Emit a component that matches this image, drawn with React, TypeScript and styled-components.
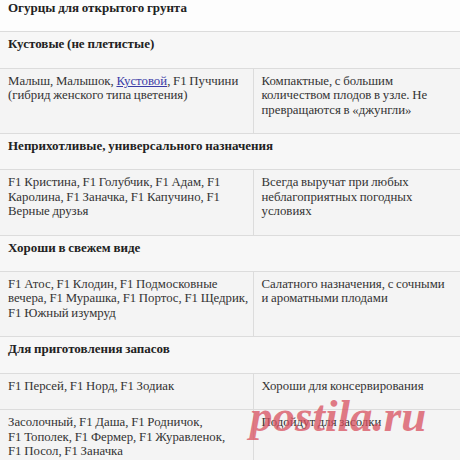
import React from 'react'
import styled, { createGlobalStyle } from 'styled-components'

const GlobalStyle = createGlobalStyle`
  html, body {
    margin: 0;
    padding: 0;
    background: #f4f4f4;
    overflow: hidden;
  }
`

const Page = styled.div`
  position: relative;
  width: 460px;
  height: 460px;
  overflow: hidden;
  background: #f4f4f4;
`

const Table = styled.table`
  border-collapse: collapse;
  table-layout: fixed;
  width: 460px;
  margin-top: -4px;
  font-family: 'Liberation Serif', 'Times New Roman', serif;
  font-size: 12.8px;
  line-height: 14.4px;
  word-spacing: -0.5px;
  color: #333;
`

const Cell = styled.td<{ $side?: boolean }>`
  padding: ${(p) => (p.$side ? '5px 8px 16px' : '5px 4px 16px 8px')};
  vertical-align: top;
  border-bottom: 1px solid #dcdcdc;
  border-left: ${(p) => (p.$side ? '1px solid #dcdcdc' : 'none')};
`

const HeadCell = styled.td<{ $title?: boolean }>`
  padding: 5px 8px 16px;
  vertical-align: top;
  font-weight: 700;
  font-size: 13px;
  color: #222;
  background: ${(p) => (p.$title ? '#fdfdfd' : '#f7f7f7')};
  border-bottom: 1px solid #dcdcdc;
`

const Link = styled.a`
  color: #3b3ba6;
  text-decoration: underline;
`

const Watermark = styled.div`
  position: absolute;
  left: 250px;
  top: 394px;
  font-family: 'Liberation Serif', 'Times New Roman', serif;
  font-style: italic;
  font-weight: 700;
  font-size: 45px;
  line-height: 45px;
  color: #d9505f;
  opacity: 0.75;
  pointer-events: none;
`

type Row =
  | { kind: 'head'; text: string; title?: boolean }
  | { kind: 'data'; left: React.ReactNode; right: string }

const nb = '\u00a0'

const rows: Row[] = [
  { kind: 'head', text: 'Огурцы для открытого грунта', title: true },
  { kind: 'head', text: 'Кустовые (не плетистые)' },
  {
    kind: 'data',
    left: (
      <>
        Малыш, Малышок, <Link href="#">Кустовой</Link>, F1 Пуччини (гибрид
        женского типа цветения)
      </>
    ),
    right: 'Компактные, с большим количеством плодов в узле. Не превращаются в «джунгли»'
  },
  { kind: 'head', text: 'Неприхотливые, универсального назначения' },
  {
    kind: 'data',
    left: 'F1 Кристина, F1 Голубчик, F1 Адам, F1 Каролина, F1 Заначка, F1 Капучино, F1 Верные друзья',
    right: 'Всегда выручат при любых неблагоприятных погодных условиях'
  },
  { kind: 'head', text: 'Хороши в свежем виде' },
  {
    kind: 'data',
    left: 'F1 Атос, F1 Клодин, F1 Подмосковные вечера, F1 Мурашка, F1 Портос, F1 Щедрик, F1 Южный изумруд',
    right: 'Салатного назначения, с сочными и ароматными плодами'
  },
  { kind: 'head', text: 'Для приготовления запасов' },
  {
    kind: 'data',
    left: 'F1 Персей, F1 Норд, F1 Зодиак',
    right: 'Хороши для консервирования'
  },
  {
    kind: 'data',
    left: `Засолочный, F1${nb}Даша, F1${nb}Родничок, F1${nb}Тополек, F1${nb}Фермер, F1${nb}Журавленок, F1${nb}Посол, F1${nb}Заначка`,
    right: 'Подойдут для засолки'
  }
]

function App(): JSX.Element {
  return (
    <Page>
      <GlobalStyle />
      <Table>
        <colgroup>
          <col style={{ width: 253 }} />
          <col />
        </colgroup>
        <tbody>
          {rows.map((row, idx) =>
            row.kind === 'head' ? (
              <tr key={idx}>
                <HeadCell colSpan={2} $title={row.title}>
                  {row.text}
                </HeadCell>
              </tr>
            ) : (
              <tr key={idx}>
                <Cell>{row.left}</Cell>
                <Cell $side>{row.right}</Cell>
              </tr>
            )
          )}
        </tbody>
      </Table>
      <Watermark>postila.ru</Watermark>
    </Page>
  )
}

export default App
